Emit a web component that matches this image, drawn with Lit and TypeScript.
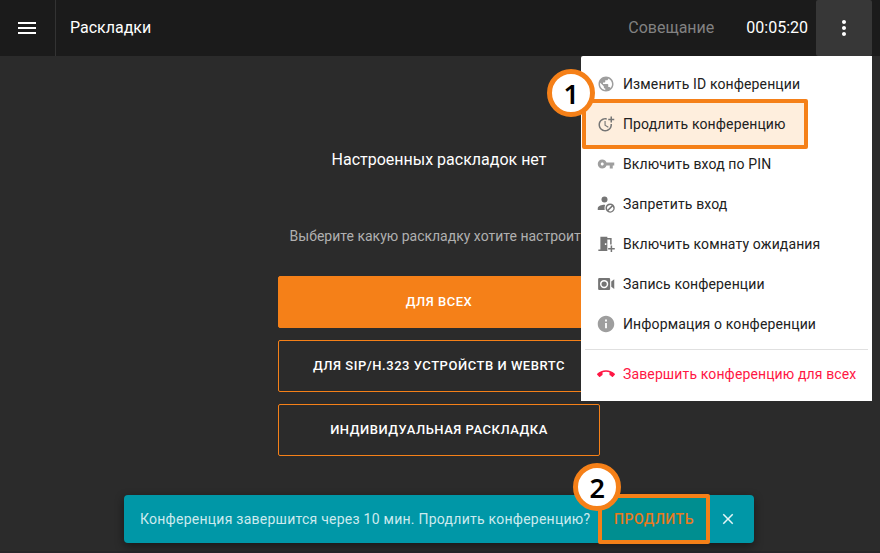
import { LitElement, html, css, svg } from "lit";
import { customElement, property } from "lit/decorators.js";
import { classMap } from "lit/directives/class-map.js";

const ICONS: Record<string, unknown> = {
  menu: svg`<path d="M3 18h18v-2H3v2zm0-5h18v-2H3v2zm0-7v2h18V6H3z"/>`,
  more: svg`<path d="M12 8c1.1 0 2-.9 2-2s-.9-2-2-2-2 .9-2 2 .9 2 2 2zm0 2c-1.1 0-2 .9-2 2s.9 2 2 2 2-.9 2-2-.9-2-2-2zm0 6c-1.1 0-2 .9-2 2s.9 2 2 2 2-.9 2-2-.9-2-2-2z"/>`,
  globe: svg`<path d="M12 2C6.48 2 2 6.48 2 12s4.48 10 10 10 10-4.480 10-10S17.520 2 12 2zm-1 17.930c-3.950-.490-7-3.850-7-7.930 0-.620.080-1.210.210-1.790L9 15v1c0 1.100.900 2 2 2v1.930zm6.900-2.540c-.260-.810-1-1.390-1.900-1.390h-1v-3c0-.550-.450-1-1-1H8v-2h2c.550 0 1-.450 1-1V7h2c1.100 0 2-.900 2-2v-.410c2.930 1.190 5 4.060 5 7.410 0 2.080-.800 3.970-2.100 5.390z"/>`,
  moretime: svg`<path d="M10 8v6l4.700 2.900.800-1.200-4-2.400V8z"/><path d="M17.920 12c.050.330.080.660.080 1 0 3.900-3.100 7-7 7s-7-3.100-7-7 3.100-7 7-7c.700 0 1.370.100 2 .290V4.230C12.360 4.080 11.690 4 11 4c-5 0-9 4-9 9s4 9 9 9 9-4 9-9c0-.340-.020-.670-.060-1h-2.020z"/><path d="M20 5V2h-2v3h-3v2h3v3h2V7h3V5z"/>`,
  key: svg`<path d="M12.650 10C11.830 7.670 9.610 6 7 6c-3.310 0-6 2.690-6 6s2.690 6 6 6c2.610 0 4.830-1.670 5.650-4H17v4h4v-4h2v-4H12.650zM7 14c-1.100 0-2-.900-2-2s.900-2 2-2 2 .900 2 2-.900 2-2 2z"/>`,
  block: svg`<circle cx="10" cy="6" r="4"/><path d="M11 13.200C10 13 9 13 8.500 13.050C4.500 13.400 1 15.200 1 18v2h9.300c-.500-2.500-.300-5 .700-6.800z"/><path fill-rule="evenodd" d="M17.500 11.200a6.200 6.200 0 1 0 0 12.400a6.200 6.200 0 0 0 0-12.400zm0 2a4.200 4.200 0 0 1 2.200.600l-5.800 5.800a4.200 4.200 0 0 1 3.600-6.400zm3.600 2.100a4.200 4.200 0 0 1-5.800 5.800z"/>`,
  door: svg`<path fill-rule="evenodd" d="M4.500 2.300h9.300V4h5.700v8.500h-2V6h-3.700v15.300H1.800v-2h2.700zM10.500 11v2.300h2V11z"/><path d="M18.200 14h2v3.200h3.500v2h-3.500v3.600h-2v-3.600h-3.300v-2h3.300z"/>`,
  record: svg`<path fill-rule="evenodd" d="M3 4h13a1.500 1.500 0 0 1 1.500 1.500v13A1.500 1.500 0 0 1 16 20H3a1.500 1.500 0 0 1-1.500-1.500v-13A1.500 1.500 0 0 1 3 4zm6.500 2.500a5.500 5.500 0 1 0 0 11a5.500 5.500 0 0 0 0-11zm0 2a3.500 3.500 0 1 1 0 7a3.500 3.500 0 0 1 0-7z"/><path d="M23 5.500v13l-4-3v-7z"/>`,
  info: svg`<path d="M12 1C5.930 1 1 5.930 1 12s4.930 11 11 11 11-4.930 11-11S18.070 1 12 1zm1.200 16.500h-2.400v-7h2.400v7zm0-9h-2.400V6.100h2.400v2.400z"/>`,
  hangup: svg`<path d="M12 9c-1.600 0-3.150.250-4.600.720v3.100c0 .390-.230.740-.560.900-.980.490-1.870 1.120-2.660 1.850-.180.180-.430.280-.700.280-.280 0-.530-.110-.710-.290L.290 13.080c-.180-.170-.290-.420-.290-.700 0-.280.110-.530.290-.710C3.340 8.780 7.460 7 12 7s8.660 1.780 11.710 4.670c.180.180.290.430.290.710 0 .280-.110.530-.290.710l-2.480 2.480c-.180.180-.430.290-.710.290-.270 0-.520-.110-.700-.280-.790-.740-1.690-1.360-2.670-1.850-.330-.160-.560-.500-.560-.900v-3.100C15.150 9.250 13.600 9 12 9z"/>`,
  close: svg`<path d="M19 6.410L17.590 5 12 10.590 6.410 5 5 6.410 10.590 12 5 17.590 6.410 19 12 13.410 17.590 19 19 17.590 13.410 12z"/>`,
};

@customElement("ui-icon")
class UiIcon extends LitElement {
  @property() name = "";
  static styles = css`
    :host { display: block; flex: none; width: 24px; height: 24px; }
    svg { display: block; width: 100%; height: 100%; fill: currentColor; }
  `;
  render() {
    return html`<svg viewBox="0 0 24 24">${ICONS[this.name]}</svg>`;
  }
}

interface Entry { icon: string; label: string; tone?: string; }

const ENTRIES: Entry[] = [
  { icon: "globe", label: "Изменить ID конференции", tone: "light" },
  { icon: "moretime", label: "Продлить конференцию" },
  { icon: "key", label: "Включить вход по PIN", tone: "light" },
  { icon: "block", label: "Запретить вход" },
  { icon: "door", label: "Включить комнату ожидания" },
  { icon: "record", label: "Запись конференции" },
  { icon: "info", label: "Информация о конференции", tone: "light" },
];

@customElement("context-menu")
class ContextMenu extends LitElement {
  static styles = css`
    :host { display: block; box-sizing: border-box; width: 291px; height: 345px; padding-top: 8px;
      background: #fff; border-radius: 2px 0 0 0; isolation: isolate; }
    .row { position: relative; display: flex; align-items: center; height: 40px; padding-left: 16px; gap: 8px;
      font-size: 14px; letter-spacing: 0.13px; color: #212121; white-space: nowrap; }
    .icon { width: 18px; height: 18px; color: #757575; }
    .light { color: #9e9e9e; }
    .divider { height: 1px; margin: 5px 4px 4px; background: #e0e0e0; }
    .danger, .danger .icon { color: #ff1744; }
    .mark { position: absolute; z-index: -1; left: 1px; top: -5px; box-sizing: border-box; width: 226px; height: 50px;
      border: 4px solid #f58018; border-radius: 2px; background: #feeedd; }
  `;
  render() {
    return html`
      ${ENTRIES.map((e) => html`
        <div class="row">
          <ui-icon class=${classMap({ icon: true, light: e.tone === "light" })} name=${e.icon}></ui-icon>
          <span>${e.label}</span>
          ${e.icon === "moretime" ? html`<div class="mark"></div>` : null}
        </div>`)}
      <div class="divider"></div>
      <div class="row danger"><ui-icon class="icon" name="hangup"></ui-icon><span>Завершить конференцию для всех</span></div>
    `;
  }
}

@customElement("app-root")
class AppRoot extends LitElement {
  static styles = css`
    :host { position: relative; display: flex; flex-direction: column; height: 553px; overflow: hidden;
      background: #2b2b2b; color: #fff; font-family: Roboto, "Noto Sans", sans-serif; }
    .bar { display: flex; align-items: center; flex: none; height: 56px; background: #1b1b1b; font-size: 16px; }
    .burger { display: flex; align-items: center; box-sizing: border-box; width: 56px; height: 56px; padding-left: 15px;
      border-right: 1px solid #333; }
    .title, .kind, .clock { padding-bottom: 2px; }
    .title { flex: 1; padding-left: 14px; }
    .kind { color: #828282; margin-right: 32px; }
    .clock { margin-right: 8px; }
    .more { display: grid; place-items: center; width: 56px; height: 56px; margin-right: 8px; border-radius: 2px; background: #373737; }
    .main { display: flex; flex: 1; flex-direction: column; align-items: center; width: 878px; padding-top: 94px; }
    .edge { flex: none; height: 2px; background: #26252a; }
    .heading { font-size: 16px; line-height: 20px; }
    .hint { margin-top: 56px; font-size: 14px; line-height: 20px; color: #b0b0b0; }
    .buttons { display: flex; flex-direction: column; gap: 12px; width: 322px; margin-top: 30px; }
    .button { display: grid; place-items: center; box-sizing: border-box; height: 52px; padding-bottom: 2px; border: 1px solid #f58018;
      border-radius: 2px; font-size: 13px; font-weight: 500; letter-spacing: 0.53px; }
    .filled { background: #f58018; }
    .menu { position: absolute; left: 581px; top: 56px; }
    .snack { position: absolute; left: 124px; top: 495px; display: flex; align-items: center; box-sizing: border-box;
      width: 630px; height: 48px; padding-left: 16px; border-radius: 4px; background: #0097a7; color: #cceaee;
      font-size: 14px; letter-spacing: 0.25px; white-space: nowrap; box-shadow: 0 3px 10px rgba(0, 0, 0, 0.45); }
    .message { width: 458px; }
    .action { display: grid; place-items: center; box-sizing: border-box; width: 112px; height: 50px; margin-top: -1px;
      border: 4px solid #f58018; border-radius: 2px; background: #008e90; color: #e87a1d; font-weight: 500; letter-spacing: 0.5px; }
    .close { width: 18px; height: 18px; margin-left: 9px; color: #e4f5f6; }
    .badge { position: absolute; display: grid; place-items: center; box-sizing: border-box; width: 48px; height: 48px;
      padding-top: 1px; border: 5px solid #f58018; border-radius: 50%; background: #fff; color: #000;
      font: 600 27px/1 "Noto Sans", sans-serif; }
    .one { left: 547.300px; top: 69.300px; }
    .two { left: 573.300px; top: 463.200px; }
  `;
  render() {
    return html`
      <div class="bar">
        <div class="burger"><ui-icon name="menu"></ui-icon></div>
        <div class="title">Раскладки</div>
        <div class="kind">Совещание</div>
        <div class="clock">00:05:20</div>
        <div class="more"><ui-icon name="more"></ui-icon></div>
      </div>
      <div class="main">
        <div class="heading">Настроенных раскладок нет</div>
        <div class="hint">Выберите какую раскладку хотите настроить</div>
        <div class="buttons">
          <div class="button filled">ДЛЯ ВСЕХ</div>
          <div class="button">ДЛЯ SIP/H.323 УСТРОЙСТВ И WEBRTC</div>
          <div class="button">ИНДИВИДУАЛЬНАЯ РАСКЛАДКА</div>
        </div>
      </div>
      <div class="edge"></div>
      <context-menu class="menu"></context-menu>
      <div class="snack">
        <div class="message">Конференция завершится через 10 мин. Продлить конференцию?</div>
        <div class="action">ПРОДЛИТЬ</div>
        <ui-icon class="close" name="close"></ui-icon>
      </div>
      <div class="badge one">1</div>
      <div class="badge two">2</div>
    `;
  }
}
